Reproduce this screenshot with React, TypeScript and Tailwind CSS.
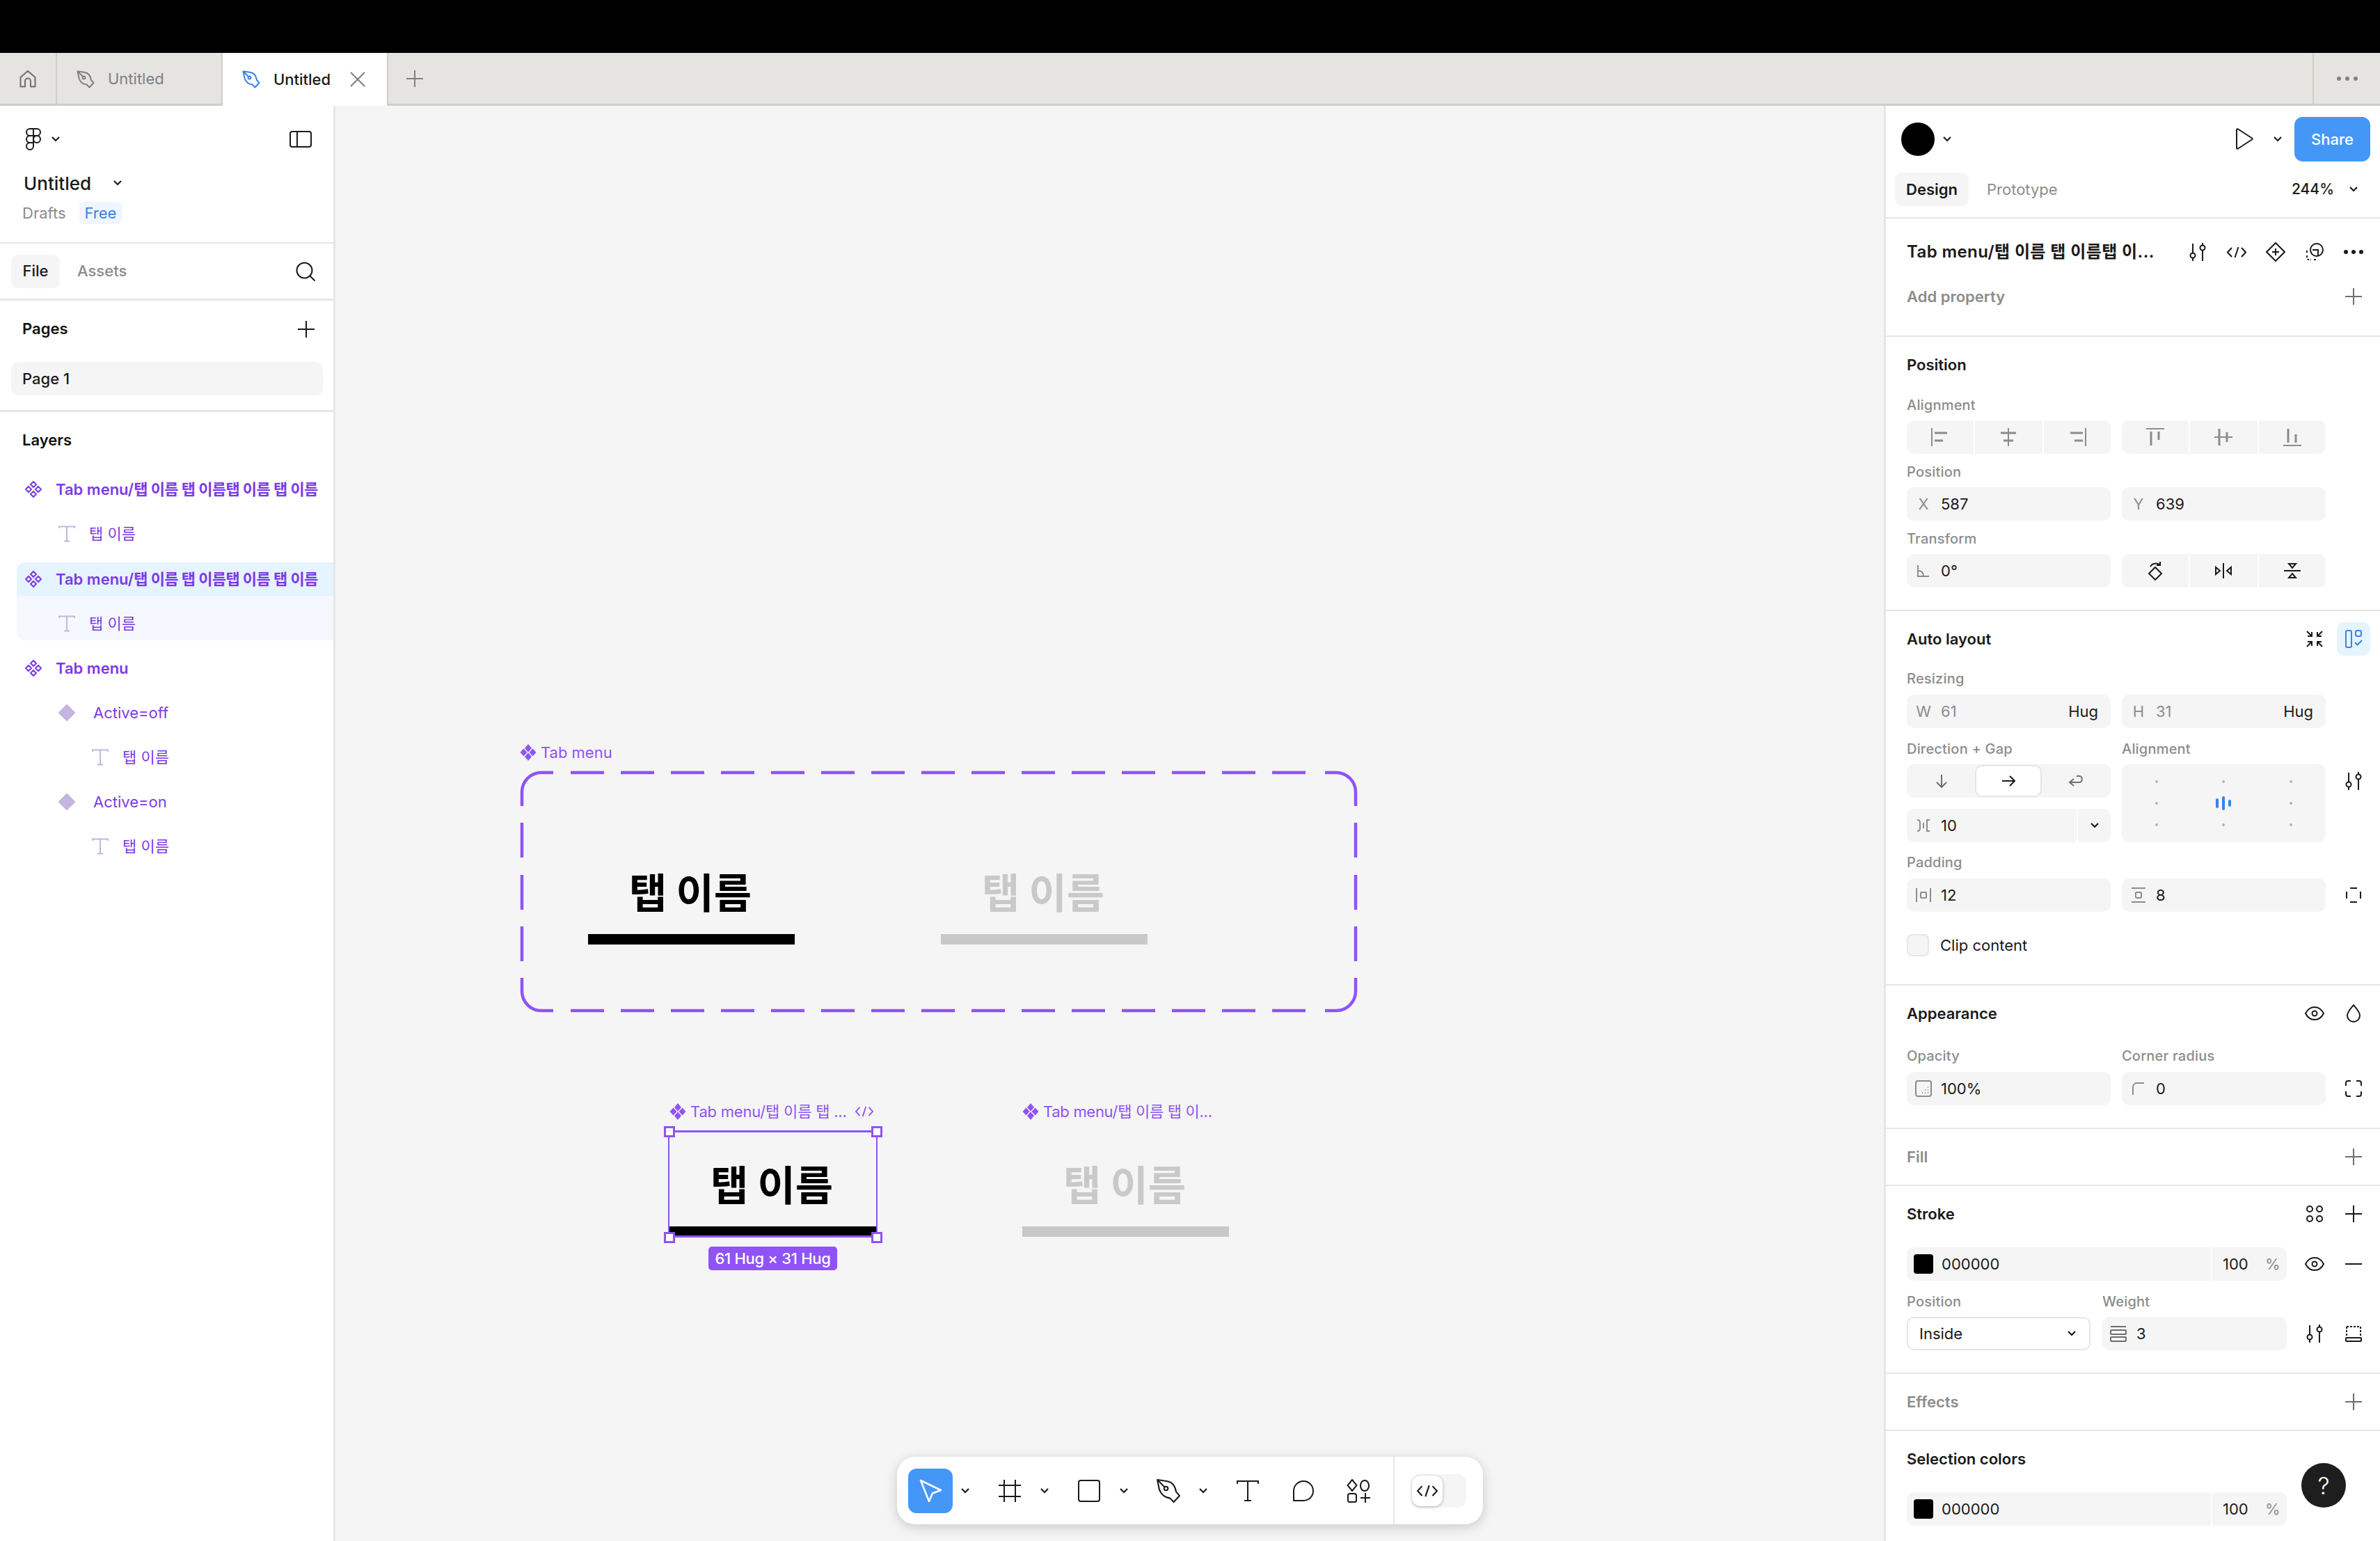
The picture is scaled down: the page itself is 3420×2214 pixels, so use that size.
import React from "react";

type P = { s?: number; h?: number; v?: number; sw?: number; className?: string; children?: React.ReactNode };
const Ic = ({ s = 32, h, v = 32, sw = 2, className = "", children }: P) => (
  <svg width={s} height={h ?? s} viewBox={`0 0 ${v} ${h ? (v * h) / s : v}`} fill="none" stroke="currentColor" strokeWidth={sw} className={`shrink-0 ${className}`}>
    {children}
  </svg>
);
const Chev = ({ className = "" }: { className?: string }) => (
  <svg width="14" height="10" viewBox="0 0 14 10" fill="none" stroke="currentColor" strokeWidth="2.2" className={className}>
    <path d="M2 2l5 5 5-5" />
  </svg>
);
const Plus = ({ className = "" }: { className?: string }) => (
  <Ic s={24} v={24} className={className}><path d="M12 0v24M0 12h24" /></Ic>
);
const Pen = ({ s = 26, sw = 2, className = "" }: { s?: number; sw?: number; className?: string }) => (
  <Ic s={s} v={26} sw={sw} className={className}>
    <path d="M1.500 1.500L12 3c5 1 8 5 9 11l3.500 4-6 6.500-4-4C9 20 5 16 3.500 11.500z" strokeLinejoin="round" />
    <circle cx="10.500" cy="10.500" r="2" />
    <path d="M1.500 1.500l7.500 7.500" />
  </Ic>
);
const Sliders = () => (
  <div className="flex w-[28px] justify-center">
    <Ic s={24} h={28} v={24}>
      <circle cx="5" cy="19" r="3.500" /><path d="M5 2v13.500M5 22.500V27" />
      <circle cx="19" cy="8" r="3.500" /><path d="M19 1v3.500M19 11.500V27" />
    </Ic>
  </div>
);
const Eye = () => (
  <Ic s={28} h={22} v={28}>
    <path d="M1 11c3-6 8-9 13-9s10 3 13 9c-3 6-8 9-13 9S4 17 1 11z" /><circle cx="14" cy="11" r="3.500" />
  </Ic>
);
const Code = ({ s = 28 }: { s?: number }) => (
  <Ic s={s} h={Math.round(s * 0.6)} v={28} sw={2}>
    <path d="M7 2L1 8.500l6 6.500M21 2l6 6.500-6 6.500M16.500 1l-5 15" />
  </Ic>
);
const LayerDiamonds = () => (
  <Ic s={24} v={24} sw={2} className="text-[#7c3ae6]">
    <path d="M12 1l4 4-4 4-4-4zM5 8l4 4-4 4-4-4zM19 8l4 4-4 4-4-4zM12 15l4 4-4 4-4-4z" />
  </Ic>
);
const CanvasDiamonds = () => (
  <svg width="24" height="24" viewBox="0 0 24 24" fill="#8f53f7" className="shrink-0">
    <path d="M12 0l5 6-5 5.500L7 6zM5.500 6.500l5 5.500-5 5.500L.5 12zM18.500 6.500l5 5.500-5 5.500-5-5.500zM12 12.500l5 5.500-5 6-5-6z" />
  </svg>
);
const TIcon = () => (
  <Ic s={24} v={24} sw={2} className="text-[#c4b5e2]"><path d="M1 4V1.500h22V4M12 1.500v21M8 22.500h8" /></Ic>
);
const FilledDiamond = () => (
  <svg width="26" height="26" viewBox="0 0 26 26" fill="#c5b5de" className="shrink-0"><path d="M13 1l12 12-12 12L1 13z" stroke="#c5b5de" strokeWidth="1" strokeLinejoin="round" /></svg>
);

const LongName = () => (
  <>Tab menu/<span className="tracking-[-0.65px]">탭 이름 탭 이름탭 이름 탭 이름</span></>
);
const Row = ({ pl, tp, name, kind, bold }: { pl: string; tp: string; name: React.ReactNode; kind: "comp" | "t" | "var"; bold?: boolean }) => (
  <div className={`flex h-[64px] items-center ${pl}`}>
    <div className="flex w-[32px] justify-center">{kind === "comp" ? <LayerDiamonds /> : kind === "t" ? <TIcon /> : <FilledDiamond />}</div>
    <span className={`${tp} whitespace-nowrap text-[22px] text-[#7c3ae6] ${bold ? "font-semibold" : "font-normal"}`}>{name}</span>
  </div>
);

const Label = ({ cls, children }: { cls: string; children: React.ReactNode }) => (
  <div className={`whitespace-nowrap text-[20px] font-medium leading-[24px] tracking-[0.2px] text-[#8c8c8c] ${cls}`}>{children}</div>
);
const Title = ({ children, muted }: { children: React.ReactNode; muted?: boolean }) => (
  <span className={`flex-1 text-[22px] font-semibold ${muted ? "text-[#8c8c8c]" : "text-[#1a1a1a]"}`}>{children}</span>
);
const Btn = ({ children, cls = "" }: { children: React.ReactNode; cls?: string }) => (
  <div className={`flex h-[48px] w-[48px] shrink-0 items-center justify-center ${cls}`}>{children}</div>
);
const Field = ({ pre, val, muted, right }: { pre: React.ReactNode; val: string; muted?: boolean; right?: string }) => (
  <div className="flex h-[48px] w-[293px] items-center rounded-[10px] bg-[#f5f5f5] pl-[8px] pr-[18px] text-[22px]">
    <div className="mr-[9px] flex w-[32px] justify-center text-[#8c8c8c]">{pre}</div>
    <span className={muted ? "text-[#8c8c8c]" : "text-[#1a1a1a]"}>{val}</span>
    {right && <span className="ml-auto text-[#1a1a1a]">{right}</span>}
  </div>
);
const Seg = ({ items }: { items: React.ReactNode[] }) => (
  <div className="flex h-[48px] w-[293px] gap-[2px] overflow-hidden rounded-[10px] text-[#8c8c8c]">
    {items.map((it, i) => (
      <div key={i} className="flex flex-1 items-center justify-center bg-[#f5f5f5]">{it}</div>
    ))}
  </div>
);
const Color = () => (
  <div className="flex h-[48px] w-[546px] items-center rounded-[10px] bg-[#f5f5f5] pl-[10px] text-[22px] text-[#1a1a1a]">
    <div className="h-[28px] w-[28px] rounded-[4px] bg-black" />
    <span className="ml-[12px] flex-1">000000</span>
    <div className="h-full w-[2px] bg-white" />
    <span className="ml-[15px] w-[61px]">100</span>
    <span className="w-[31px] text-[#8c8c8c]">%</span>
  </div>
);

const Tab = ({ y, color }: { y: string; color: string }) => (
  <div className={`absolute ${y} flex flex-col items-center`}>
    <div className={`h-[120px] whitespace-nowrap pr-[3px] text-[59px] font-bold leading-[115px] [font-family:'Noto_Sans_CJK_KR',sans-serif] ${color}`}>탭 이름</div>
    <div className={`h-[15px] w-[297px] ${color === "text-black" ? "bg-black" : "bg-[#c9c9c9]"}`} />
  </div>
);
const Handle = ({ pos }: { pos: string }) => <div className={`absolute h-[16px] w-[16px] border-[3px] border-[#8f53f7] bg-white ${pos}`} />;

const ox = 744, oy = 1104;
const seg = (x1: number, y1: number, x2: number, y2: number) => `M${x1 - ox} ${y1 - oy}L${x2 - ox} ${y2 - oy}`;
const dashes = [
  ...Array.from({ length: 15 }, (_, i) => seg(820 + 72 * i, 1110, 868 + 72 * i, 1110)),
  ...Array.from({ length: 15 }, (_, i) => seg(820 + 72 * i, 1452, 868 + 72 * i, 1452)),
  ...[1182, 1257, 1331].flatMap((y) => [seg(750, y, 750, y + 50), seg(1948, y, 1948, y + 50)]),
  "M51 6H34A28 28 0 0 0 6 34V54",
  "M1160 6H1176A28 28 0 0 1 1204 34V54",
  "M6 301V320A28 28 0 0 0 34 348H51",
  "M1160 348H1176A28 28 0 0 0 1204 320V301",
].join("");

export default function App() {
  return (
    <div className="flex h-[2214px] w-[3420px] flex-col overflow-hidden bg-[#f5f5f5] text-[#1a1a1a] [font-family:Inter,'Noto_Sans_CJK_KR',sans-serif]">
      <div className="h-[76px] shrink-0 bg-black" />
      {/* Tab bar */}
      <div className="flex h-[76px] shrink-0 border-b-[3px] border-[#cfcec9] bg-[#e5e4e0] text-[22px]">
        <div className="flex w-[82px] items-center justify-center border-r-2 border-[#cfcec9] text-[#6e6e6e]">
          <Ic s={26} v={26}><path d="M2.500 24.500V11L13 2l10.500 9v13.500H17v-8a4 4 0 0 0-8 0v8z" strokeLinejoin="round" /></Ic>
        </div>
        <div className="flex w-[238px] items-center border-r-2 border-[#cfcec9] pl-[28px] pt-[2px] text-[#808080]">
          <Pen />
          <span className="ml-[19px]">Untitled</span>
        </div>
        <div className="-mb-[3px] flex w-[236px] items-center bg-white pl-[28px] text-[#1a1a1a]">
          <Pen className="text-[#3b82e6]" />
          <span className="ml-[19px] font-medium">Untitled</span>
          <Ic s={22} v={22} className="ml-[28px] text-[#808080]"><path d="M1 1l20 20M21 1L1 21" /></Ic>
        </div>
        <div className="flex w-[78px] items-center justify-center border-l-2 border-[#cfcec9] text-[#808080]">
          <Plus />
        </div>
        <div className="ml-auto flex w-[97px] items-center justify-center border-l-2 border-[#cfcec9]">
          <div className="flex gap-[6px]">
            <div className="h-[6px] w-[6px] rounded-full bg-[#808080]" />
            <div className="h-[6px] w-[6px] rounded-full bg-[#808080]" />
            <div className="h-[6px] w-[6px] rounded-full bg-[#808080]" />
          </div>
        </div>
      </div>

      <div className="flex min-h-0 flex-1">
        {/* Left */}
        <aside className="w-[482px] shrink-0 border-r-[3px] border-[#e6e6e6] bg-white">
          <div className="h-[198px] border-b-2 border-[#e6e6e6] pt-[30px]">
            <div className="flex h-[36px] items-center pl-[37px] pr-[31px]">
              <svg width="22" height="32" viewBox="0 0 22 32" fill="none" stroke="#1a1a1a" strokeWidth="2">
                <path d="M11 1H6a5 5 0 0 0 0 10h5zM11 1h5a5 5 0 0 1 0 10h-5zM11 11H6a5 5 0 0 0 0 10h5zM21 16a5 5 0 1 1-10 0 5 5 0 0 1 10 0zM11 21H6a5 5 0 1 0 5 5z" />
              </svg>
              <Chev className="ml-[14px]" />
              <svg width="32" height="24" viewBox="0 0 32 24" fill="none" stroke="#1a1a1a" strokeWidth="2" className="ml-auto">
                <rect x="1" y="1" width="30" height="22" rx="3" /><path d="M11 1v22" />
              </svg>
            </div>
            <div className="mt-[27px] flex h-[36px] items-center pl-[34px]">
              <span className="text-[26px] font-medium text-[#1a1a1a]">Untitled</span>
              <Chev className="ml-[31px]" />
            </div>
            <div className="mt-[9px] flex h-[32px] items-center pl-[32px] text-[22px]">
              <span className="text-[#8c8c8c]">Drafts</span>
              <span className="ml-[19px] flex h-[32px] w-[62px] items-center justify-center rounded-[8px] bg-[#f0f6ff] text-[#3b82e6]">Free</span>
            </div>
          </div>
          <div className="flex h-[82px] items-center border-b-[3px] border-[#e6e6e6] pl-[16px] pr-[26px] text-[22px]">
            <div className="flex h-[48px] w-[70px] items-center justify-center rounded-[10px] bg-[#f5f5f5] font-medium">File</div>
            <span className="ml-[25px] font-medium text-[#8c8c8c]">Assets</span>
            <Ic s={28} v={28} className="ml-auto"><circle cx="12.500" cy="12.500" r="11" /><path d="M20.500 20.500l7 7" /></Ic>
          </div>
          <div className="h-[160px] border-b-[3px] border-[#e6e6e6]">
            <div className="flex h-[80px] items-center pl-[32px] pr-[27px] pt-[1px]">
              <span className="flex-1 text-[22px] font-semibold text-[#111]">Pages</span>
              <Plus className="text-[#1a1a1a]" />
            </div>
            <div className="ml-[16px] mt-[8px] flex h-[48px] w-[448px] items-center rounded-[10px] bg-[#f5f5f5] pl-[16px] text-[22px] font-medium">Page 1</div>
          </div>
          <div className="flex h-[79px] items-center pl-[32px] pt-[2px] text-[22px] font-semibold text-[#111]">Layers</div>
          <Row pl="pl-[32px]" tp="ml-[16px]" kind="comp" bold name={<LongName />} />
          <Row pl="pl-[80px]" tp="ml-[16px]" kind="t" name="탭 이름" />
          <div className="ml-[24px] mt-[9px] flex h-[48px] items-center rounded-tl-[12px] bg-[#e5f4ff] pl-[8px]">
            <div className="flex w-[32px] justify-center"><LayerDiamonds /></div>
            <span className="ml-[16px] whitespace-nowrap text-[22px] font-semibold text-[#7c3ae6]"><LongName /></span>
          </div>
          <div className="ml-[24px] flex h-[64px] items-center rounded-bl-[12px] bg-[#f5f9ff] pl-[56px] pt-[16px]">
            <div className="flex w-[32px] justify-center"><TIcon /></div>
            <span className="ml-[16px] text-[22px] text-[#7c3ae6]">탭 이름</span>
          </div>
          <div className="mt-[8px]">
            <Row pl="pl-[32px]" tp="ml-[16px]" kind="comp" bold name="Tab menu" />
            <Row pl="pl-[80px]" tp="ml-[22px]" kind="var" name="Active=off" />
            <Row pl="pl-[128px]" tp="ml-[16px]" kind="t" name="탭 이름" />
            <Row pl="pl-[80px]" tp="ml-[22px]" kind="var" name="Active=on" />
            <Row pl="pl-[128px]" tp="ml-[16px]" kind="t" name="탭 이름" />
          </div>
        </aside>

        {/* Canvas */}
        <main className="relative min-w-0 flex-1 bg-[#f5f5f5]">
          <div className="absolute left-[265px] top-[916px] flex h-[26px] items-center gap-[6px] whitespace-nowrap text-[22px] text-[#8f53f7]">
            <CanvasDiamonds />
            <span>Tab menu</span>
          </div>
          <svg width="1210" height="354" viewBox="0 0 1210 354" fill="none" stroke="#8f53f7" strokeWidth="4.500" className="absolute left-[262px] top-[952px]">
            <path d={dashes} />
          </svg>
          <Tab y="left-[363px] top-[1070px]" color="text-black" />
          <Tab y="left-[870px] top-[1070px]" color="text-[#c9c9c9]" />

          <div className="absolute left-[480px] top-[1432px] flex h-[26px] items-center gap-[6px] whitespace-nowrap text-[22px] text-[#8f53f7]">
            <CanvasDiamonds />
            <span className="tracking-[-0.2px]">Tab menu/탭 이름 탭 ...</span>
            <span className="ml-[6px]"><Code s={26} /></span>
          </div>
          <div className="absolute left-[987px] top-[1432px] flex h-[26px] items-center gap-[6px] whitespace-nowrap text-[22px] text-[#8f53f7]">
            <CanvasDiamonds />
            <span className="tracking-[-0.3px]">Tab menu/탭 이름 탭 이...</span>
          </div>
          <Tab y="left-[480px] top-[1490px]" color="text-black" />
          <Tab y="left-[987px] top-[1490px]" color="text-[#c9c9c9]" />
          <div className="absolute left-[478px] top-[1472px] h-[154px] w-[301px] border-x-2 border-y-[3px] border-[#8f53f7]" />
          <Handle pos="left-[472px] top-[1466px]" />
          <Handle pos="left-[770px] top-[1466px]" />
          <Handle pos="left-[472px] top-[1618px]" />
          <Handle pos="left-[770px] top-[1618px]" />
          <div className="absolute left-[536px] top-[1639px] flex h-[34px] w-[185px] items-center justify-center whitespace-nowrap rounded-[5px] bg-[#8f53f7] text-[22px] font-medium tracking-[-0.3px] text-white">61 Hug × 31 Hug</div>

          {/* Toolbar */}
          <div className="absolute left-[807px] top-[1941px] flex h-[97px] w-[842px] items-center rounded-[26px] bg-white pl-[16px] text-[#1a1a1a] shadow-[0_4px_18px_rgba(0,0,0,0.18)]">
            <div className="flex h-[64px] w-[64px] items-center justify-center rounded-[12px] bg-[#4597f7] text-white">
              <Ic s={36} v={36} sw={2.500}><path d="M4 3l29 14-12 4.500L16 33z" strokeLinejoin="round" /></Ic>
            </div>
            <div className="flex w-[36px] justify-center"><Chev /></div>
            <div className="ml-[14px] flex h-[64px] w-[64px] items-center justify-center">
              <Ic><path d="M8 0v32M24 0v32M0 8h32M0 24h32" /></Ic>
            </div>
            <div className="flex w-[36px] justify-center"><Chev /></div>
            <div className="ml-[14px] flex h-[64px] w-[64px] items-center justify-center">
              <Ic><rect x="1" y="1" width="30" height="30" rx="3" /></Ic>
            </div>
            <div className="flex w-[36px] justify-center"><Chev /></div>
            <div className="ml-[14px] flex h-[64px] w-[64px] items-center justify-center"><Pen s={36} sw={1.500} /></div>
            <div className="flex w-[36px] justify-center"><Chev /></div>
            <div className="ml-[14px] flex h-[64px] w-[64px] items-center justify-center">
              <Ic><path d="M1 6V2h30v4M16 2v28M11 30h10" /></Ic>
            </div>
            <div className="ml-[16px] flex h-[64px] w-[64px] items-center justify-center">
              <Ic><path d="M2 30V16a14 14 0 1 1 14 14z" strokeLinejoin="round" /></Ic>
            </div>
            <div className="ml-[15px] flex h-[64px] w-[64px] items-center justify-center">
              <Ic s={34} v={34}>
                <path d="M8 1l6.500 8L8 17 1.500 9zM26 2a6 7.500 0 1 0 .01 0z" />
                <rect x="2" y="21" width="12" height="12" rx="2.500" /><path d="M27 20v14M20 27h14" />
              </Ic>
            </div>
            <div className="ml-[18px] h-full w-[2px] bg-[#e6e6e6]" />
            <div className="ml-[25px] h-[48px] w-[78px] rounded-[12px] bg-[#f5f5f5]">
              <div className="mt-[2px] flex h-[44px] w-[44px] items-center justify-center rounded-[12px] bg-white shadow-[0_1px_4px_rgba(0,0,0,0.3)]">
                <Code s={30} />
              </div>
            </div>
          </div>
        </main>

        {/* Right */}
        <aside className="relative w-[713px] shrink-0 border-l-[3px] border-[#e6e6e6] bg-white">
          <div className="h-[162px] border-b-2 border-[#e6e6e6] pt-[16px]">
            <div className="flex h-[64px] items-center pl-[22px] pr-[14px]">
              <div className="h-[48px] w-[48px] rounded-full bg-black" />
              <Chev className="ml-[11px]" />
              <Ic s={28} h={32} v={28} className="ml-[406px]"><path d="M3 2.500c0-1 1-1.500 2-1l20 13c1 .6 1 1.400 0 2l-20 13c-1 .5-2 0-2-1z" strokeLinejoin="round" /></Ic>
              <Chev className="ml-[27px]" />
              <div className="ml-[17px] flex h-[64px] w-[109px] items-center justify-center rounded-[12px] bg-[#4597f7] text-[22px] font-medium text-white">Share</div>
            </div>
            <div className="mt-[16px] flex h-[48px] items-center pl-[13px] pr-[31px] text-[22px]">
              <div className="flex h-[48px] w-[106px] items-center justify-center rounded-[10px] bg-[#f5f5f5] font-semibold">Design</div>
              <span className="ml-[26px] text-[#8c8c8c]">Prototype</span>
              <span className="ml-auto text-[21px] font-medium">244%</span>
              <Chev className="ml-[21px]" />
            </div>
          </div>
          <div className="h-[170px] border-b-2 border-[#e6e6e6] pl-[30px] pr-[14px]">
            <div className="flex h-[96px] items-center">
              <span className="w-[358px] whitespace-nowrap text-[24px] font-semibold tracking-[0.4px]">Tab menu/탭 이름 탭 이름탭 이...</span>
              <div className="ml-[46px] flex items-center gap-[28px]">
                <Sliders />
                <Code />
                <Ic s={28} v={28}><path d="M14 1l13 13-13 13L1 14zM14 9v10M9 14h10" strokeLinejoin="round" /></Ic>
                <Ic s={28} v={28}>
                  <circle cx="17" cy="11" r="9" />
                  <path d="M11 11h8v8" />
                  <path d="M3 12v3M3 19v3c0 2 1 3 3 3h3M13 25h4" strokeDasharray="3 2" />
                </Ic>
                <div className="flex w-[28px] items-center justify-between">
                  <div className="h-[6px] w-[6px] rounded-full bg-[#1a1a1a]" />
                  <div className="h-[6px] w-[6px] rounded-full bg-[#1a1a1a]" />
                  <div className="h-[6px] w-[6px] rounded-full bg-[#1a1a1a]" />
                </div>
              </div>
            </div>
            <div className="mt-[-6px] flex h-[44px] items-center pr-[12px]">
              <Title muted>Add property</Title>
              <Plus className="text-[#6e6e6e]" />
            </div>
          </div>

          <div className="h-[394px] border-b-2 border-[#e6e6e6] pl-[30px] pr-[14px]">
            <div className="flex h-[80px] items-center"><Title>Position</Title></div>
            <Label cls="h-[40px] pt-[6px]">Alignment</Label>
            <div className="flex gap-[16px]">
              <Seg items={[
                <Ic key="a"><path d="M4 3v26" /><path d="M8 10h18M8 21h12" strokeWidth="3" /></Ic>,
                <Ic key="b"><path d="M16 3v26" /><path d="M5 10h22M9 21h14" strokeWidth="3" /></Ic>,
                <Ic key="c"><path d="M28 3v26" /><path d="M6 10h18M12 21h12" strokeWidth="3" /></Ic>,
              ]} />
              <Seg items={[
                <Ic key="a"><path d="M3 4h26" /><path d="M10 8v20M21 8v12" strokeWidth="3" /></Ic>,
                <Ic key="b"><path d="M3 16h26" /><path d="M10 4v24M21 9v14" strokeWidth="3" /></Ic>,
                <Ic key="c"><path d="M3 28h26" /><path d="M10 4v20M21 12v12" strokeWidth="3" /></Ic>,
              ]} />
            </div>
            <Label cls="h-[48px] pt-[14px]">Position</Label>
            <div className="flex gap-[16px]">
              <Field pre="X" val="587" />
              <Field pre="Y" val="639" />
            </div>
            <Label cls="h-[48px] pt-[14px]">Transform</Label>
            <div className="flex gap-[16px]">
              <Field pre={<Ic s={20} v={20}><path d="M2 2v16h16M2 10c5 0 8 3 8 8" /></Ic>} val="0°" />
              <Seg items={[
                <Ic key="a" s={28} v={28} className="text-[#1a1a1a]"><path d="M14 9l9 9-9 9-9-9zM7 8c3-5 10-6 14-2M21 1v5h-5" /></Ic>,
                <Ic key="b" s={26} v={26} className="text-[#1a1a1a]"><path d="M13 2v22M2 8v10l6-5zM24 8v10l-6-5z" /></Ic>,
                <Ic key="c" s={26} v={26} className="text-[#1a1a1a]"><path d="M1 13h24M8 3h10l-5 6zM8 23h10l-5-6z" /></Ic>,
              ]} />
            </div>
          </div>

          <div className="h-[538px] border-b-2 border-[#e6e6e6] pl-[30px] pr-[14px]">
            <div className="flex h-[80px] items-center gap-[8px]">
              <Title>Auto layout</Title>
              <Btn>
                <Ic s={26} v={26}><path d="M2 2l7 7M3 9h6V3M24 2l-7 7M23 9h-6V3M2 24l7-7M3 17h6v6M24 24l-7-7M23 17h-6v6" /></Ic>
              </Btn>
              <Btn cls="rounded-[10px] bg-[#e5f4ff] text-[#3b82e6]">
                <Ic s={26} v={26}>
                  <rect x="2" y="1" width="8" height="24" rx="2" /><rect x="16" y="1" width="8" height="8" rx="2" /><path d="M15 18l3.500 3.500L25 15" />
                </Ic>
              </Btn>
            </div>
            <Label cls="h-[40px] pt-[5px]">Resizing</Label>
            <div className="flex gap-[16px]">
              <Field pre="W" val="61" muted right="Hug" />
              <Field pre="H" val="31" muted right="Hug" />
            </div>
            <div className="flex gap-[16px]">
              <Label cls="h-[52px] w-[293px] pt-[18px]">Direction + Gap</Label>
              <Label cls="h-[52px] w-[293px] pt-[18px]">Alignment</Label>
            </div>
            <div className="flex gap-[16px]">
              <div className="flex w-[293px] flex-col gap-[16px]">
                <div className="flex h-[48px] items-center rounded-[10px] bg-[#f5f5f5] pl-[2px] pr-[2px] text-[#6e6e6e]">
                  <div className="flex w-[96px] justify-center"><Ic s={20} v={20}><path d="M10 1v18M3 12l7 7 7-7" /></Ic></div>
                  <div className="flex h-[46px] w-[96px] items-center justify-center rounded-[10px] border-2 border-[#e6e6e6] bg-white text-[#1a1a1a]"><Ic s={20} v={20}><path d="M1 10h18M12 3l7 7-7 7" /></Ic></div>
                  <div className="flex w-[97px] justify-center"><Ic s={22} v={22}><path d="M8 18l-6-5 6-5M2 13h14c5 0 5-9 0-9h-4" /></Ic></div>
                </div>
                <div className="flex h-[48px] items-center overflow-hidden rounded-[10px] text-[22px]">
                  <div className="flex h-full w-[244px] items-center bg-[#f5f5f5] pl-[8px]">
                    <div className="mr-[9px] flex w-[32px] justify-center text-[#8c8c8c]"><Ic s={20} v={20}><path d="M1 2c3 0 4 2 4 4v8c0 2-1 4-4 4M19 2h-4v16h4M10 6v8" /></Ic></div>
                    <span>10</span>
                  </div>
                  <div className="ml-[2px] flex h-full flex-1 items-center justify-center bg-[#f5f5f5]"><Chev /></div>
                </div>
              </div>
              <div className="grid h-[112px] w-[293px] grid-cols-3 grid-rows-3 place-items-center rounded-[10px] bg-[#f5f5f5] px-[2px] py-[10px]">
                {[0, 1, 2, 3, 4, 5, 6, 7, 8].map((i) =>
                  i === 4 ? (
                    <div key={i} className="flex items-center gap-[5px]">
                      <div className="h-[14px] w-[4px] rounded-full bg-[#3b82e6]" />
                      <div className="h-[20px] w-[4px] rounded-full bg-[#3b82e6]" />
                      <div className="h-[10px] w-[4px] rounded-full bg-[#3b82e6]" />
                    </div>
                  ) : (
                    <div key={i} className="h-[4px] w-[4px] rounded-full bg-[#b3b3b3]" />
                  )
                )}
              </div>
              <div className="flex h-[48px] w-[48px] items-start justify-center pt-[10px]"><Sliders /></div>
            </div>
            <Label cls="h-[52px] pt-[17px]">Padding</Label>
            <div className="flex items-center gap-[16px]">
              <Field pre={<Ic s={22} v={22}><path d="M1 1v20M21 1v20" /><rect x="7" y="7" width="8" height="8" rx="1" /></Ic>} val="12" />
              <Field pre={<Ic s={22} v={22}><path d="M1 1h20M1 21h20" /><rect x="7" y="7" width="8" height="8" rx="1" /></Ic>} val="8" />
              <Btn><Ic s={22} v={22}><path d="M6 1h10M6 21h10M1 6v10M21 6v10" /></Ic></Btn>
            </div>
            <div className="mt-[32px] flex h-[32px] items-center text-[22px]">
              <div className="h-[32px] w-[32px] rounded-[8px] border-2 border-[#e6e6e6] bg-[#f5f5f5]" />
              <span className="ml-[16px]">Clip content</span>
            </div>
          </div>

          <div className="h-[206px] border-b-2 border-[#e6e6e6] pl-[30px] pr-[14px]">
            <div className="flex h-[80px] items-center gap-[8px]">
              <Title>Appearance</Title>
              <Btn><Eye /></Btn>
              <Btn><Ic s={22} h={26} v={22}><path d="M11 1c-5 6-9 10-9 15a9 9 0 0 0 18 0c0-5-4-9-9-15z" strokeLinejoin="round" /></Ic></Btn>
            </div>
            <div className="flex gap-[16px]">
              <Label cls="h-[44px] w-[293px] pt-[9px]">Opacity</Label>
              <Label cls="h-[44px] w-[293px] pt-[9px]">Corner radius</Label>
            </div>
            <div className="flex items-center gap-[16px]">
              <Field pre={<Ic s={24} v={24}><rect x="1" y="1" width="22" height="22" rx="3" /><path d="M10 18h1M14 18h1M18 18h1M14 14h1M18 14h1M18 10h1" /></Ic>} val="100%" />
              <Field pre={<Ic s={18} v={18}><path d="M1 18V7c0-3 2-6 6-6h10" /></Ic>} val="0" />
              <Btn><Ic s={24} v={24}><path d="M8 1H4C2 1 1 2 1 4v4M16 1h4c2 0 3 1 3 3v4M8 23H4c-2 0-3-1-3-3v-4M16 23h4c2 0 3-1 3-3v-4" /></Ic></Btn>
            </div>
          </div>

          <div className="flex h-[82px] items-center border-b-2 border-[#e6e6e6] pl-[30px] pr-[14px]">
            <Title muted>Fill</Title>
            <Btn><Plus className="text-[#6e6e6e]" /></Btn>
          </div>

          <div className="h-[270px] border-b-2 border-[#e6e6e6] pl-[30px] pr-[14px]">
            <div className="flex h-[80px] items-center gap-[8px]">
              <Title>Stroke</Title>
              <Btn><Ic s={24} v={24}><circle cx="5" cy="5" r="4" /><circle cx="19" cy="5" r="4" /><circle cx="5" cy="19" r="4" /><circle cx="19" cy="19" r="4" /></Ic></Btn>
              <Btn><Plus /></Btn>
            </div>
            <div className="mt-[8px] flex items-center gap-[8px]">
              <Color />
              <div className="ml-[8px]"><Btn><Eye /></Btn></div>
              <Btn><Ic s={24} h={2} v={24}><path d="M0 1h24" /></Ic></Btn>
            </div>
            <div className="flex gap-[17px]">
              <Label cls="h-[52px] w-[264px] pt-[18px]">Position</Label>
              <Label cls="h-[52px] w-[265px] pt-[18px]">Weight</Label>
            </div>
            <div className="flex items-center">
              <div className="flex h-[48px] w-[264px] items-center rounded-[10px] border-2 border-[#e6e6e6] pl-[16px] pr-[18px] text-[22px]">
                <span className="flex-1">Inside</span>
                <Chev />
              </div>
              <div className="ml-[17px] flex h-[48px] w-[265px] items-center rounded-[10px] bg-[#f5f5f5] pl-[11px] text-[22px]">
                <div className="text-[#6e6e6e]"><Ic s={24} v={24}><path d="M1 2h22" /><rect x="1" y="7" width="22" height="6" rx="1" /><rect x="1" y="17" width="22" height="6" rx="1" /></Ic></div>
                <span className="ml-[14px]">3</span>
              </div>
              <div className="ml-[16px]"><Btn><Sliders /></Btn></div>
              <div className="ml-[8px]"><Btn><Ic s={24} v={24}><path d="M2 2h20M2 2v15M22 2v15" strokeDasharray="3 2" /><rect x="1" y="18" width="22" height="5" rx="1" /></Ic></Btn></div>
            </div>
          </div>

          <div className="flex h-[82px] items-center border-b-2 border-[#e6e6e6] pl-[30px] pr-[14px]">
            <Title muted>Effects</Title>
            <Btn><Plus className="text-[#6e6e6e]" /></Btn>
          </div>

          <div className="pl-[30px] pr-[14px]">
            <div className="flex h-[80px] items-center"><Title>Selection colors</Title></div>
            <div className="mt-[8px]"><Color /></div>
          </div>

          <div className="absolute left-[597px] top-[1950px] flex h-[64px] w-[64px] items-center justify-center rounded-full bg-[#1e1e1e] text-[34px] font-light text-white">?</div>
        </aside>
      </div>
    </div>
  );
}
